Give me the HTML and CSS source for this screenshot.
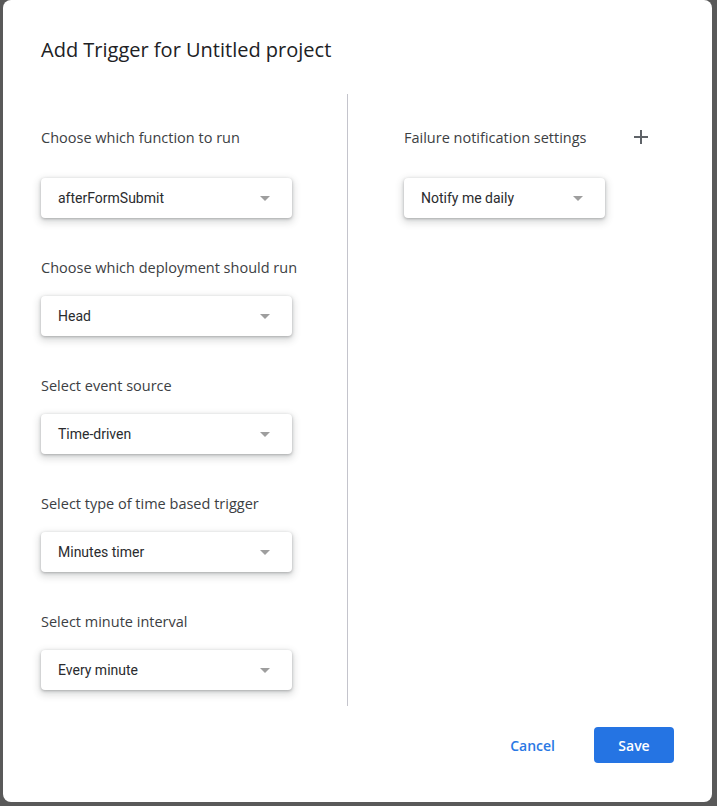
FILE: index.html
```html
<!DOCTYPE html>
<html>
<head>
<meta charset="utf-8">
<link rel="stylesheet" href="styles.css">
</head>
<body>
<div class="dialog">
  <div class="header">
    <h1 class="title">Add Trigger for Untitled project</h1>
  </div>
  <div class="body">
    <div class="col col-left">
      <div class="group">
        <div class="head-row"><span class="label">Choose which function to run</span></div>
        <div class="select first"><span class="value">afterFormSubmit</span><span class="arrow"></span></div>
      </div>
      <div class="group">
        <div class="label-line"><span class="label">Choose which deployment should run</span></div>
        <div class="select"><span class="value">Head</span><span class="arrow"></span></div>
      </div>
      <div class="group">
        <div class="label-line"><span class="label">Select event source</span></div>
        <div class="select"><span class="value">Time-driven</span><span class="arrow"></span></div>
      </div>
      <div class="group">
        <div class="label-line"><span class="label">Select type of time based trigger</span></div>
        <div class="select"><span class="value">Minutes timer</span><span class="arrow"></span></div>
      </div>
      <div class="group">
        <div class="label-line"><span class="label">Select minute interval</span></div>
        <div class="select"><span class="value">Every minute</span><span class="arrow"></span></div>
      </div>
    </div>
    <div class="col col-right">
      <div class="group">
        <div class="head-row">
          <span class="label">Failure notification settings</span>
          <span class="add-btn">
            <svg width="14" height="14" viewBox="0 0 14 14"><path d="M7 0v14M0 7h14" stroke="#5f6368" stroke-width="2" fill="none"/></svg>
          </span>
        </div>
        <div class="select first narrow"><span class="value">Notify me daily</span><span class="arrow"></span></div>
      </div>
    </div>
  </div>
  <div class="footer">
    <button class="btn btn-text">Cancel</button>
    <button class="btn btn-primary">Save</button>
  </div>
</div>
</body>
</html>
```

FILE: styles.css
```css
html, body {
  margin: 0;
  padding: 0;
}
body {
  background: #595959;
  width: 717px;
  height: 806px;
  overflow: hidden;
}
.dialog {
  margin-left: 3px;
  width: 709px;
  height: 802px;
  background: #ffffff;
  border-radius: 8px;
  box-sizing: border-box;
  padding: 0 38px;
  display: flex;
  flex-direction: column;
}
.header {
  height: 94px;
  display: flex;
  align-items: flex-start;
}
.title {
  margin: 37px 0 0 0;
  font-family: "Open Sans", sans-serif;
  font-weight: 400;
  font-size: 20px;
  line-height: 26px;
  color: #202124;
  letter-spacing: 0;
}
.body {
  display: flex;
  height: 612px;
}
.col {
  padding-top: 25px;
}
.col-left {
  width: 306px;
  border-right: 1px solid #c4c4cc;
}
.col-right {
  padding-left: 56px;
  width: 201px;
}
.head-row {
  height: 36px;
  display: flex;
  align-items: center;
  justify-content: space-between;
}
.label-line {
  margin-top: 39px;
  height: 20px;
  display: flex;
  align-items: center;
}
.label {
  font-family: "Open Sans", sans-serif;
  font-size: 14.5px;
  color: #3c4043;
}
.col-right .head-row {
  width: 255px;
}
.add-btn {
  width: 36px;
  height: 36px;
  display: flex;
  align-items: center;
  justify-content: center;
}
.select {
  margin-top: 19px;
  width: 251px;
  height: 40px;
  box-sizing: border-box;
  border-radius: 4px;
  background: #fff;
  box-shadow: 0 1px 3px rgba(60,64,67,0.35), 0 3px 7px 2px rgba(60,64,67,0.17);
  display: flex;
  align-items: center;
  justify-content: space-between;
  padding: 0 22px 0 17px;
}
.select.first {
  margin-top: 23px;
}
.select.narrow {
  width: 201px;
}
.value {
  font-family: Roboto, sans-serif;
  font-size: 14px;
  color: #2a2b2e;
}
.arrow {
  width: 0;
  height: 0;
  border-left: 5px solid transparent;
  border-right: 5px solid transparent;
  border-top: 5px solid #9e9e9e;
  margin-top: 1px;
}
.footer {
  display: flex;
  justify-content: flex-end;
  align-items: center;
  padding-top: 21px;
}
.btn {
  height: 36px;
  border: none;
  border-radius: 4px;
  font-family: "Open Sans", sans-serif;
  font-weight: 600;
  font-size: 14px;
  cursor: pointer;
}
.btn-text {
  background: transparent;
  color: #2a78e4;
  padding: 0 16px;
  margin-right: 23px;
}
.btn-primary {
  background: #2574e3;
  color: #fff;
  width: 80px;
  padding: 0;
}
```
